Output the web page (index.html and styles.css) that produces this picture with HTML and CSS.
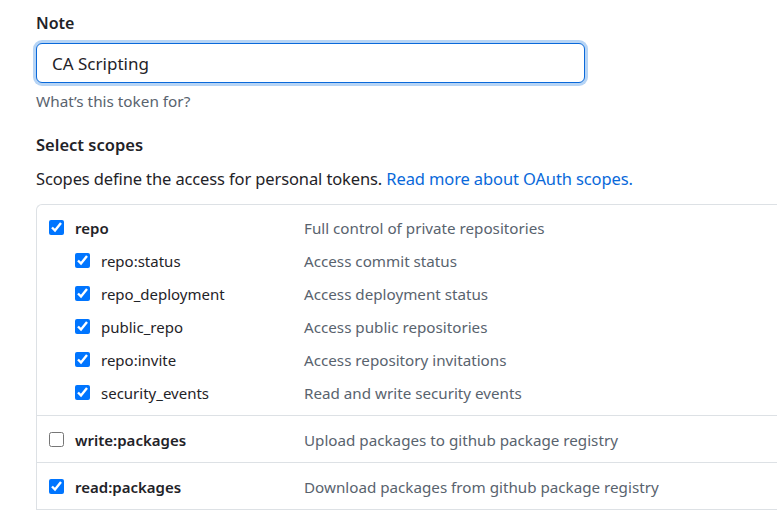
FILE: index.html
```html
<!DOCTYPE html>
<html lang="en">
<head>
<meta charset="utf-8">
<link rel="stylesheet" href="styles.css">
</head>
<body>
<div class="page">
  <label class="field-label" for="note">Note</label>
  <input id="note" class="note-input" type="text" value="CA Scripting">
  <p class="hint">What’s this token for?</p>

  <h3 class="section-title">Select scopes</h3>
  <p class="section-desc">Scopes define the access for personal tokens. <a href="#">Read more about OAuth scopes.</a></p>

  <div class="scopes">
    <div class="group">
      <div class="row">
        <label class="name top"><input type="checkbox" checked><span>repo</span></label>
        <span class="desc">Full control of private repositories</span>
      </div>
      <div class="row">
        <label class="name sub"><input type="checkbox" checked><span>repo:status</span></label>
        <span class="desc">Access commit status</span>
      </div>
      <div class="row">
        <label class="name sub"><input type="checkbox" checked><span>repo_deployment</span></label>
        <span class="desc">Access deployment status</span>
      </div>
      <div class="row">
        <label class="name sub"><input type="checkbox" checked><span>public_repo</span></label>
        <span class="desc">Access public repositories</span>
      </div>
      <div class="row">
        <label class="name sub"><input type="checkbox" checked><span>repo:invite</span></label>
        <span class="desc">Access repository invitations</span>
      </div>
      <div class="row">
        <label class="name sub"><input type="checkbox" checked><span>security_events</span></label>
        <span class="desc">Read and write security events</span>
      </div>
    </div>
    <div class="group single">
      <div class="row">
        <label class="name top"><input type="checkbox"><span>write:packages</span></label>
        <span class="desc">Upload packages to github package registry</span>
      </div>
    </div>
    <div class="group single">
      <div class="row">
        <label class="name top"><input type="checkbox" checked><span>read:packages</span></label>
        <span class="desc">Download packages from github package registry</span>
      </div>
    </div>
  </div>
</div>
</body>
</html>
```

FILE: styles.css
```css
* { box-sizing: border-box; }
html, body { margin: 0; padding: 0; background: #fff; }
body {
  font-family: "Noto Sans", "Open Sans", sans-serif;
  color: #1f2328;
  overflow: hidden;
}
.page {
  padding: 11px 0 0 36px;
  width: 777px;
}
.field-label {
  display: block;
  font-size: 16px;
  font-weight: 600;
  line-height: 24px;
  margin-bottom: 8px;
}
.note-input {
  display: block;
  width: 549px;
  height: 40px;
  border: 1px solid #0969da;
  border-radius: 6px;
  box-shadow: 0 0 0 3px #b6d4f5;
  padding: 1px 15px 0;
  font-family: inherit;
  font-size: 17px;
  color: #1f2328;
  outline: none;
}
.hint {
  margin: 8px 0 0;
  font-size: 15.3px;
  line-height: 20px;
  color: #59636e;
}
.section-title {
  margin: 21px 0 0;
  font-size: 16.5px;
  font-weight: 600;
  line-height: 26px;
}
.section-desc {
  margin: 8px 0 0;
  font-size: 16.5px;
  letter-spacing: -0.12px;
  line-height: 26px;
}
.section-desc a { color: #0969da; text-decoration: none; }
.scopes {
  margin-top: 12px;
  border-top: 1px solid #dde1e5;
  border-left: 1px solid #dde1e5;
  border-top-left-radius: 6px;
}
.group {
  padding: 6px 0;
  border-bottom: 1px solid #dde1e5;
}
.group.single { padding: 7px 0 6px; }
.row {
  display: grid;
  grid-template-columns: 267px 1fr;
  align-items: center;
  height: 33px;
}
.name {
  display: flex;
  align-items: center;
  font-size: 15px;
  color: #1f2328;
}
.name.top { padding-left: 12px; font-weight: 600; }
.name.sub { padding-left: 38px; }
.name input {
  margin: 0 11px 0 0;
  width: 15px;
  height: 15px;
}
.desc {
  font-size: 15.2px;
  color: #59636e;
}
```
